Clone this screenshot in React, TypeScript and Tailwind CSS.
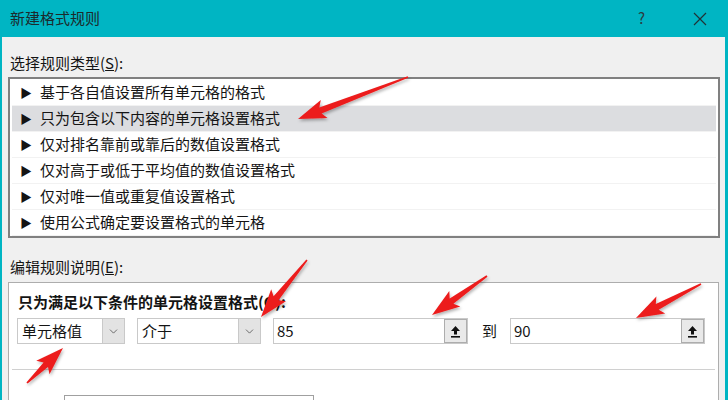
import { ChevronDown } from "lucide-react";

const rules = [
  "基于各自值设置所有单元格的格式",
  "只为包含以下内容的单元格设置格式",
  "仅对排名靠前或靠后的数值设置格式",
  "仅对高于或低于平均值的数值设置格式",
  "仅对唯一值或重复值设置格式",
  "使用公式确定要设置格式的单元格",
];

// red annotation arrow, tail -> tip
function arrowPoints(x1: number, y1: number, x2: number, y2: number) {
  const dx = x2 - x1;
  const dy = y2 - y1;
  const len = Math.hypot(dx, dy);
  const ux = dx / len;
  const uy = dy / len;
  const nx = -uy;
  const ny = ux;
  const head = 24;
  const bx = x2 - ux * head;
  const by = y2 - uy * head;
  const p = (x: number, y: number) => `${x.toFixed(1)},${y.toFixed(1)}`;
  return [
    p(x1 + nx * 0.8, y1 + ny * 0.8),
    p(bx + nx * 3.2, by + ny * 3.2),
    p(bx - ux * 4 + nx * 9.5, by - uy * 4 + ny * 9.5),
    p(x2, y2),
    p(bx - ux * 4 - nx * 9.5, by - uy * 4 - ny * 9.5),
    p(bx - nx * 3.2, by - ny * 3.2),
    p(x1 - nx * 0.8, y1 - ny * 0.8),
  ].join(" ");
}

const arrows = [
  [408, 77, 298, 119],
  [307, 260, 261, 317],
  [27, 383, 63, 348],
  [487, 276, 432, 315],
  [701, 284, 636, 318],
];

function Dropdown({ label, width }: { label: string; width: string }) {
  return (
    <div className={`flex h-[26px] ${width} border border-[#c9c9c9] bg-white`}>
      <div className="flex-1 pl-[4px] leading-[24px]">{label}</div>
      <div className="flex w-[22px] items-center justify-center border-l border-[#c9c9c9] bg-[#e3e3e3]">
        <ChevronDown size={13} strokeWidth={1.3} className="text-[#3c3c3c]" />
      </div>
    </div>
  );
}

function RefInput({ value }: { value: string }) {
  return (
    <div className="flex h-[26px] w-[195px] border border-[#c9c9c9] bg-white">
      <div className="flex-1 pl-[3px] leading-[24px]">{value}</div>
      <div className="flex w-[23px] items-center justify-center border border-[#adadad] bg-[#e9e9e9]">
        <svg width="11" height="13" viewBox="0 0 11 13">
          <path d="M5.5 1 L10 6 L7 6 L7 9.5 L4 9.5 L4 6 L1 6 Z" fill="#111" />
          <rect x="1" y="11" width="9" height="1.6" fill="#111" />
        </svg>
      </div>
    </div>
  );
}

export default function App() {
  return (
    <div
      className="relative flex h-[400px] w-[728px] flex-col overflow-hidden text-[15px] text-[#141414]"
      style={{ fontFamily: '"Noto Sans CJK SC", "Noto Sans", sans-serif' }}
    >
      {/* title bar */}
      <div className="flex h-[37px] shrink-0 items-center bg-[#00b5c3] pl-[10px] pr-[22px]">
        <span className="flex-1 text-[15px] text-[#1c2a2c]">新建格式规则</span>
        <span className="mr-[48px] text-[15px] text-[#2b3c40]">?</span>
        <svg width="14" height="14" viewBox="0 0 14 14" className="mr-[-1px]">
          <path d="M1 1 L13 13 M13 1 L1 13" stroke="#1f3337" strokeWidth="1.2" />
        </svg>
      </div>

      {/* body */}
      <div className="flex flex-1 flex-col border-l-2 border-r-[3px] border-[#00b5c3] bg-[#f0f0f0] pl-[6px] pr-[5px]">
        <div className="mt-[15px] mb-[3px] pl-[2px] leading-[22px]">
          选择规则类型(<span className="underline">S</span>):
        </div>

        {/* rule list */}
        <div className="h-[161px] w-[712px] border-2 border-[#808080] bg-white px-[2px] pt-[1px]">
          {rules.map((r, i) => (
            <div
              key={r}
              className={`flex h-[26px] items-center border-b border-[#f2f2f2] pl-[8px] ${
                i === 1 ? "bg-[#dcdde0]" : ""
              }`}
            >
              <span className="mr-[8px] text-[12px] leading-none">▶</span>
              <span>{r}</span>
            </div>
          ))}
        </div>

        <div className="mt-[18px] mb-[4px] pl-[2px] leading-[22px]">
          编辑规则说明(<span className="underline">E</span>):
        </div>

        {/* description panel */}
        <div className="w-[711px] flex-1 border border-[#adadad] bg-white pt-[8px]">
          <div className="pl-[9px] font-bold leading-[22px]">只为满足以下条件的单元格设置格式(O):</div>
          <div className="mt-[5px] flex items-center pl-[8px]">
            <Dropdown label="单元格值" width="w-[108px]" />
            <div className="ml-[12px]">
              <Dropdown label="介于" width="w-[124px]" />
            </div>
            <div className="ml-[12px]">
              <RefInput value="85" />
            </div>
            <span className="ml-[14px] mr-[13px]">到</span>
            <RefInput value="90" />
          </div>
          <div className="mx-[3px] mt-[25px] h-px bg-[#d0d0d0]" />
          <div className="ml-[55px] mt-[25px] h-[20px] w-[250px] border border-[#a0a0a0]" />
        </div>
      </div>

      {/* red annotation arrows */}
      <svg className="pointer-events-none absolute left-0 top-0" width="728" height="400">
        <defs>
          <filter id="sh" x="-20%" y="-20%" width="140%" height="140%">
            <feDropShadow dx="1" dy="2" stdDeviation="1.5" floodColor="#000" floodOpacity="0.3" />
          </filter>
        </defs>
        {arrows.map(([a, b, c, d], i) => (
          <polygon key={i} points={arrowPoints(a, b, c, d)} fill="#ec1c1c" filter="url(#sh)" />
        ))}
      </svg>
    </div>
  );
}
